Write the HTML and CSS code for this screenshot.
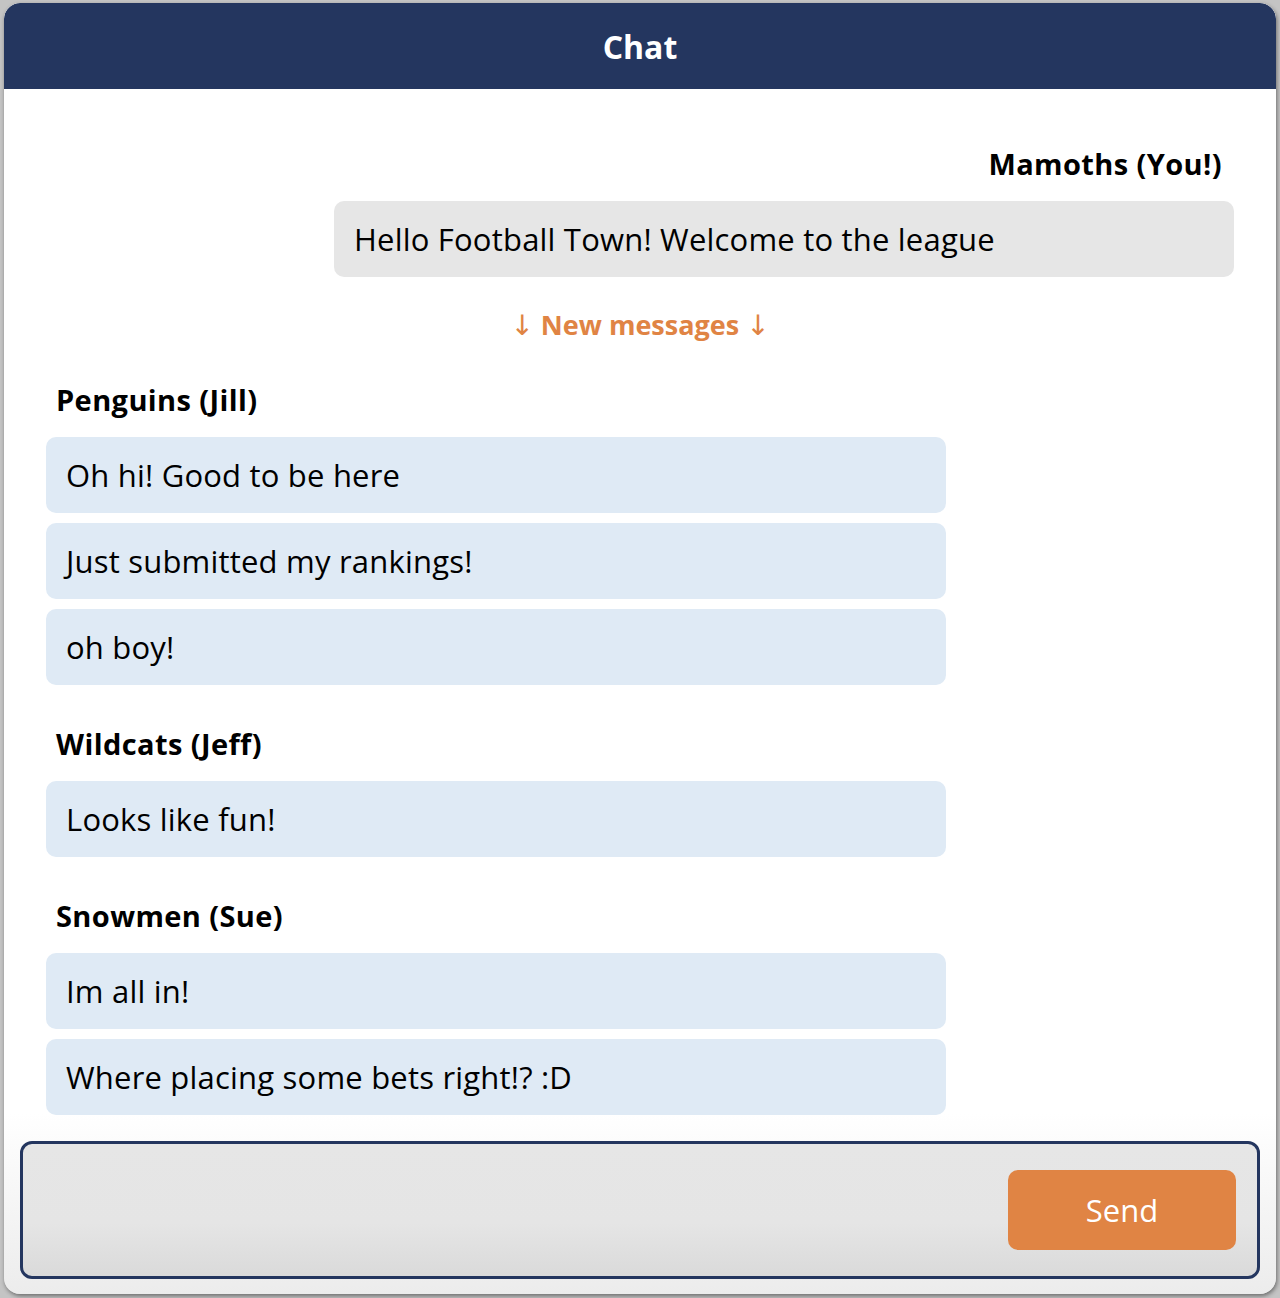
FILE: index.html
```html
<!DOCTYPE html>
<html>
<head>
<meta charset="utf-8">
<link rel="stylesheet" href="styles.css">
</head>
<body>
<div class="card">
  <header class="header">Chat</header>
  <main class="messages">
    <section class="group mine">
      <div class="name">Mamoths (You!)</div>
      <div class="bubble own">Hello Football Town! Welcome to the league</div>
    </section>
    <div class="divider"><span class="arrow">↓</span> New messages <span class="arrow">↓</span></div>
    <section class="group">
      <div class="name">Penguins (Jill)</div>
      <div class="bubble">Oh hi! Good to be here</div>
      <div class="bubble">Just submitted my rankings!</div>
      <div class="bubble">oh boy!</div>
    </section>
    <section class="group">
      <div class="name">Wildcats (Jeff)</div>
      <div class="bubble">Looks like fun!</div>
    </section>
    <section class="group">
      <div class="name">Snowmen (Sue)</div>
      <div class="bubble">Im all in!</div>
      <div class="bubble">Where placing some bets right!? :D</div>
    </section>
  </main>
  <form class="composer">
    <div class="field"></div>
    <button type="button" class="send">Send</button>
  </form>
</div>
</body>
</html>
```
FILE: styles.css
```css
* { box-sizing: border-box; }
html, body { margin: 0; padding: 0; }
body {
  background: #c4c4c4;
  font-family: "Open Sans", "Noto Sans", sans-serif;
  color: #000;
  height: 1298px;
  padding: 3px 4px 0 4px;
}
.card {
  height: 1291px;
  border-radius: 16px;
  background: linear-gradient(#ffffff 0%, #ffffff 86%, #ececec 100%);
  box-shadow: 1px 2px 4px rgba(0,0,0,0.45);
  display: flex;
  flex-direction: column;
  overflow: hidden;
}
.header {
  height: 86px;
  background: #24365f;
  color: #fff;
  font-weight: 700;
  font-size: 32px;
  display: flex;
  align-items: center;
  justify-content: center;
  border-radius: 16px 16px 0 0;
}
.messages {
  padding: 57px 42px 0 42px;
  display: flex;
  flex-direction: column;
}
.group { display: flex; flex-direction: column; gap: 10px; }
.group + .group { margin-top: 41px; }
.name {
  font-weight: 700;
  font-size: 29px;
  letter-spacing: 0.4px;
  line-height: 36px;
  height: 36px;
  padding: 0 10px;
  margin-bottom: 9px;
}
.mine { align-items: flex-end; }
.mine .name { padding: 0 12px; }
.bubble {
  width: 900px;
  height: 76px;
  display: flex;
  align-items: center;
  padding: 0 20px;
  font-size: 31px;
  letter-spacing: 0.2px;
  background: #dfeaf5;
  border-radius: 10px;
}
.bubble.own { background: #e6e6e6; }
.divider {
  margin: 30px 0 39px;
  height: 36px;
  text-align: center;
  color: #e08444;
  font-weight: 700;
  font-size: 27px;
  line-height: 36px;
}
.arrow {
  font-family: "DejaVu Sans", sans-serif;
  font-weight: 400;
  font-size: 28px;
  line-height: 1;
}
.composer {
  margin: 26px 16px 0 16px;
  height: 138px;
  border: 3px solid #24365f;
  border-radius: 12px;
  background: linear-gradient(#e6e6e6 0%, #e5e5e5 60%, #dadada 100%);
  display: flex;
  align-items: center;
  padding: 0 21px 0 21px;
}
.field { flex: 1; }
.send {
  width: 228px;
  height: 80px;
  border: none;
  border-radius: 10px;
  background: #e08444;
  color: #fff;
  font-family: inherit;
  font-size: 31px;
  font-weight: 500;
}
```
